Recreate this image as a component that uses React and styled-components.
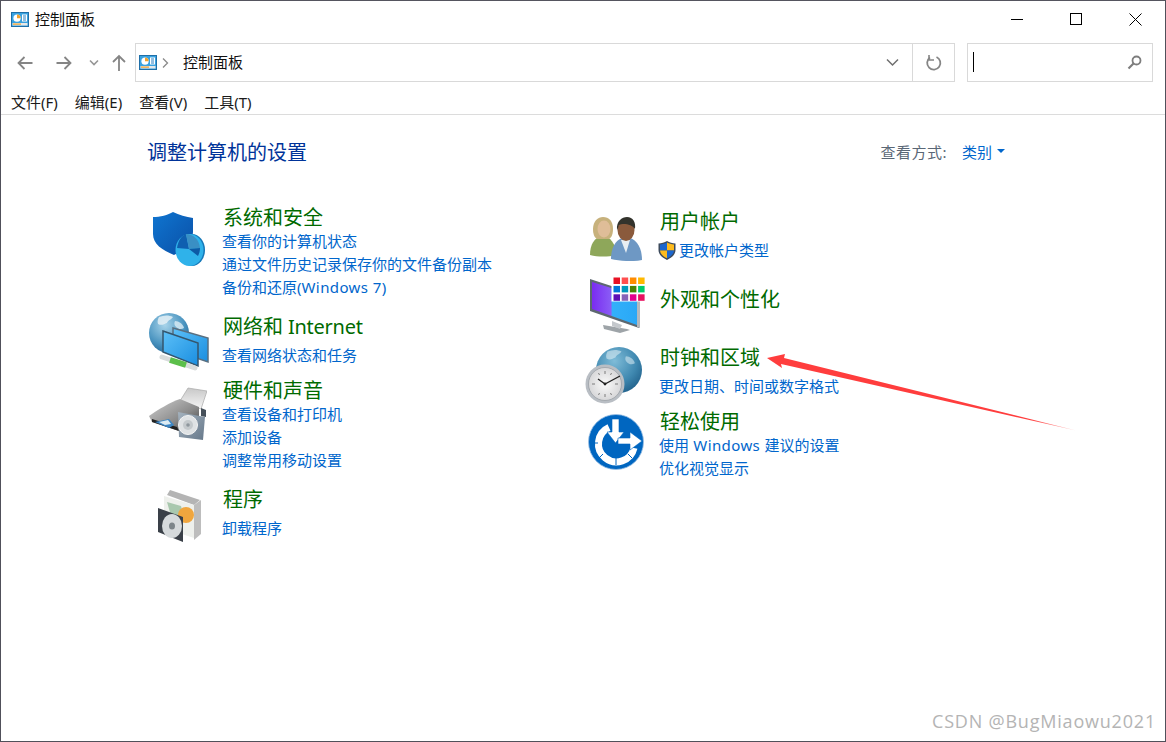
import React from "react";
import styled, { createGlobalStyle } from "styled-components";

const GlobalStyle = createGlobalStyle`
  html, body {
    margin: 0;
    padding: 0;
    background: #fff;
  }
  body {
    font-family: "Noto Sans", "Noto Sans CJK SC", sans-serif;
    font-size: 15px;
  }
`;

const Win = styled.div`
  position: relative;
  box-sizing: border-box;
  width: 1166px;
  height: 742px;
  border: 1px solid #50505a;
  border-top-color: #55555f;
  background: #fff;
  overflow: hidden;
`;

/* title bar */
const TitleBar = styled.div`
  display: flex;
  align-items: center;
  box-sizing: border-box;
  height: 36px;
  padding-left: 10px;
`;
const TitleText = styled.span`
  margin-left: 6px;
  font-size: 15px;
  color: #111;
  line-height: 20px;
`;
const WinButtons = styled.div`
  display: flex;
  margin-left: auto;
  height: 36px;
`;
const WinButton = styled.div`
  display: flex;
  align-items: center;
  justify-content: center;
  width: 59px;
`;

/* nav and address */
const Toolbar = styled.div`
  display: flex;
  align-items: stretch;
  height: 39px;
  margin-top: 6px;
`;
const NavGroup = styled.div`
  display: flex;
  align-items: center;
  width: 134px;
  padding-left: 16px;
  box-sizing: border-box;
`;
const NavIcon = styled.svg`
  flex: none;
  margin-right: ${(p) => p.$after}px;
`;
const AddressBar = styled.div`
  display: flex;
  align-items: center;
  box-sizing: border-box;
  width: 820px;
  border: 1px solid #d9d9d9;
  padding-left: 3px;
`;
const Crumb = styled.span`
  font-size: 15px;
  color: #111;
  margin: -2px 0 0 10px;
`;
const AddressEnd = styled.div`
  display: flex;
  align-items: center;
  margin-left: auto;
  height: 100%;
`;
const RefreshBox = styled.div`
  display: flex;
  align-items: center;
  justify-content: center;
  box-sizing: border-box;
  width: 42px;
  height: 100%;
  margin-left: 13px;
  border-left: 1px solid #d9d9d9;
`;
const SearchBox = styled.div`
  display: flex;
  align-items: center;
  justify-content: space-between;
  box-sizing: border-box;
  width: 186px;
  margin-left: 12px;
  padding: 0 10px 0 5px;
  border: 1px solid #d9d9d9;
`;
const Cursor = styled.div`
  width: 1px;
  height: 20px;
  margin-top: -2px;
  background: #000;
`;

/* menu */
const MenuBar = styled.div`
  display: flex;
  gap: 17px;
  height: 33px;
  align-items: center;
  padding-left: 10px;
  padding-top: 8px;
  box-sizing: border-box;
  border-bottom: 1px solid #dcdcdc;
`;
const MenuItem = styled.span`
  font-size: 15px;
  color: #1a1a1a;
  line-height: 20px;
`;

/* content */
const Content = styled.div`
  padding: 0 160px 0 147px;
`;
const HeaderRow = styled.div`
  display: flex;
  align-items: center;
  justify-content: space-between;
  height: 26px;
  margin-top: 25px;
`;
const PageTitle = styled.h1`
  margin: 0 0 0 -1px;
  font-size: 20px;
  font-weight: 400;
  color: #003399;
  line-height: 26px;
`;
const ViewBy = styled.div`
  display: flex;
  align-items: center;
  margin-bottom: 4px;
`;
const ViewLabel = styled.span`
  font-size: 15px;
  letter-spacing: 0.5px;
  color: #5a6776;
  margin-right: 15px;
`;
const ViewValue = styled.span`
  font-size: 15px;
  color: #0066cc;
`;
const Caret = styled.span`
  width: 0;
  height: 0;
  margin-left: 5px;
  border-left: 4px solid transparent;
  border-right: 4px solid transparent;
  border-top: 4px solid #0066cc;
`;
const Columns = styled.div`
  display: grid;
  grid-template-columns: 437px 1fr;
  margin-top: 38px;
`;
const Column = styled.div`
  display: flex;
  flex-direction: column;
  padding-top: ${(p) => p.$top || 0}px;
`;
const Section = styled.section`
  display: flex;
  margin-top: ${(p) => p.$gap || 0}px;
`;
const IconSlot = styled.div`
  flex: none;
  width: 74px;
  height: 26px;
  padding-left: ${(p) => p.$x}px;
  margin-top: ${(p) => p.$y}px;
  box-sizing: border-box;
`;
const Body = styled.div`
  display: flex;
  flex-direction: column;
`;
const Heading = styled.div`
  font-size: 20px;
  line-height: 27px;
  margin-left: 1px;
  color: #006a00;
  margin-bottom: ${(p) => (p.$single ? 4 : -1)}px;
`;
const HeadingLatin = styled.span`
  letter-spacing: -0.25px;
`;
const LinkRow = styled.a`
  display: flex;
  align-items: center;
  font-size: 15px;
  line-height: 23px;
  height: 23px;
  color: #0066cc;
  white-space: pre;
`;
const Latin = styled.span`
  letter-spacing: 0.4px;
`;
const UacIcon = styled.svg`
  flex: none;
  margin: 0 3px 0 -1px;
`;

/* overlays */
const Pointer = styled.svg`
  position: absolute;
  left: 0;
  top: 0;
  pointer-events: none;
`;
const Watermark = styled.div`
  position: absolute;
  right: 9px;
  bottom: 8px;
  font-family: "Open Sans", sans-serif;
  font-size: 18px;
  line-height: 24px;
  letter-spacing: 0.8px;
  color: #b4b4b4;
`;

const CpIcon = () => (
  <svg width="18" height="15" viewBox="0 0 18 15">
    <rect x="0.5" y="0.5" width="17" height="14" fill="#39a2e0" stroke="#1f6fa8" />
    <rect x="1.5" y="11" width="15" height="2.5" fill="#e8e8e8" />
    <rect x="2" y="11.5" width="8" height="1.2" fill="#f2a12c" />
    <circle cx="6" cy="6.2" r="3.6" fill="#fff" />
    <path d="M6 6.2V2.6A3.6 3.6 0 0 1 9.6 6.2Z" fill="#f2a12c" />
    <rect x="11" y="2.5" width="5" height="7" fill="#fff" />
    <path d="M12 4h3M12 6h3M12 8h3" stroke="#2a7fc0" />
  </svg>
);

const ShieldPie = () => (
  <svg width="52" height="54" viewBox="0 0 52 54">
    <defs>
      <linearGradient id="shieldFill" x1="0" y1="0" x2="1" y2="1">
        <stop offset="0" stopColor="#0f75d0" />
        <stop offset="1" stopColor="#0a4fa6" />
      </linearGradient>
    </defs>
    <path d="M20 0C15 3 7 5 0 5V22C0 32 9 38 21 43C30 39 40 32 40 20V6C33 5 26 3 20 0Z" fill="url(#shieldFill)" />
    <ellipse cx="39" cy="38" rx="13" ry="16" fill="#1578b8" />
    <ellipse cx="36.5" cy="38" rx="14" ry="16" fill="#2fb2ea" />
    <path d="M33 22L36 37L24 36C25 29 28 24 33 22Z" fill="#0f5fb0" />
    <path d="M36 37L33 22C40 22 46 27 47 36Z" fill="#3a8fc4" />
    <path d="M36 37L47 36C47 39 46 42 45 44Z" fill="#0d5aa5" />
  </svg>
);

const Globe = ({ id, cx, cy, r, dark }) => (
  <g>
    <defs>
      <radialGradient id={id} cx="0.4" cy="0.3" r="0.8">
        <stop offset="0" stopColor={dark ? "#7fbcd8" : "#a8d4ea"} />
        <stop offset="0.6" stopColor={dark ? "#3f88b0" : "#4a94c0"} />
        <stop offset="1" stopColor={dark ? "#1c5a84" : "#1f5f8f"} />
      </radialGradient>
    </defs>
    <circle cx={cx} cy={cy} r={r} fill={`url(#${id})`} />
    <path
      d={`M${cx - r * 0.5} ${cy - r * 0.8}c5 -2 10 -2 14 0c-2 3 -5 3 -6 6c-3 1 -5 3 -9 1c-1 -3 0 -5 1 -7Z`}
      fill="#e4f0f6"
      opacity={dark ? 0.55 : 0.85}
    />
    <path
      d={`M${cx + r * 0.3} ${cy - r * 0.6}c4 0 8 3 9 7c-3 2 -6 1 -8 -1c-2 -2 -2 -4 -1 -6Z`}
      fill="#dcecf4"
      opacity={dark ? 0.55 : 0.8}
    />
  </g>
);

const NetworkIcon = () => (
  <svg width="60" height="60" viewBox="0 0 60 60">
    <defs>
      <linearGradient id="scr" x1="0" y1="0" x2="1" y2="1">
        <stop offset="0" stopColor="#5cc0f8" />
        <stop offset="1" stopColor="#1a8ee0" />
      </linearGradient>
    </defs>
    <Globe id="gNet" cx={20} cy={20} r={20} />
    <path d="M24 15L59 25V49L24 37Z" fill="url(#scr)" stroke="#5a6f80" strokeWidth="1.5" />
    <path d="M14 18L49 30V53L14 39Z" fill="url(#scr)" stroke="#34566e" strokeWidth="1.5" />
    <path d="M13 44L46 55" stroke="#d8dcdc" strokeWidth="5" strokeLinecap="round" />
    <path d="M21 47L37 52" stroke="#5cbf4a" strokeWidth="6" />
  </svg>
);

const PrinterIcon = () => (
  <svg width="58" height="54" viewBox="0 0 58 54">
    <defs>
      <linearGradient id="sheet" x1="0" y1="0" x2="0" y2="1">
        <stop offset="0" stopColor="#c8c8c8" />
        <stop offset="1" stopColor="#f6f6f6" />
      </linearGradient>
      <linearGradient id="prn" x1="0" y1="0" x2="1" y2="1">
        <stop offset="0" stopColor="#d0d0d0" />
        <stop offset="0.6" stopColor="#8a8a8a" />
        <stop offset="1" stopColor="#3a3a3a" />
      </linearGradient>
      <linearGradient id="spk" x1="0" y1="0" x2="1" y2="1">
        <stop offset="0" stopColor="#a4b2be" />
        <stop offset="1" stopColor="#66788a" />
      </linearGradient>
    </defs>
    <path d="M31 14L39 1L58 4L52 22Z" fill="url(#sheet)" stroke="#a8a8a8" strokeWidth="0.7" />
    <path d="M0 29C8 23 22 15 31 12L50 20V30L30 44L3 35Z" fill="url(#prn)" />
    <path d="M3 32L28 40L30 44L3 35Z" fill="#222" />
    <path d="M6 35L20 32L25 38L20 41Z" fill="#3c86c4" />
    <path d="M10 35L19 33L22 37L16 38Z" fill="#dcecf4" />
    <path d="M29 25L56 30L54 53L30 50Z" fill="url(#spk)" />
    <path d="M52 21L57 23V30L52 29Z" fill="#46505a" />
    <circle cx="39" cy="38" r="9.5" fill="#dfe2e4" stroke="#f4f4f4" />
    <circle cx="39" cy="38" r="5" fill="#c4c9cc" />
    <circle cx="39" cy="38" r="1.8" fill="#8e969c" />
  </svg>
);

const BoxIcon = () => (
  <svg width="46" height="52" viewBox="0 0 46 52">
    <path d="M10 5L13 0L43 10L37 15Z" fill="#b4b4b4" />
    <path d="M7 6L37 15V48L7 38Z" fill="#eef0ec" />
    <path d="M37 15L44 10V44L37 50Z" fill="#bdbdbd" />
    <path d="M10 12L24 16L28 30L14 26Z" fill="#a9c8ae" />
    <circle cx="29" cy="25" r="8" fill="#f0a63e" />
    <path d="M1 18L26 27V52L1 42Z" fill="#3a4048" />
    <ellipse cx="15" cy="36" rx="10" ry="12" fill="#d6dadc" />
    <ellipse cx="15" cy="36" rx="3" ry="3.5" fill="#7d858a" />
  </svg>
);

const UsersIcon = () => (
  <svg width="52" height="44" viewBox="0 0 52 44">
    <path d="M0 38C0 28 4 20 13 19C20 20 26 26 26 38C18 40 8 40 0 38Z" fill="#8ea75a" />
    <path d="M3 12C3 4 8 0 13 0C19 0 23 4 23 12C23 18 21 21 19 22H7C5 21 3 18 3 12Z" fill="#c7b17c" />
    <ellipse cx="14" cy="12" rx="6.5" ry="8.5" fill="#dfbd98" />
    <path d="M21 42C21 30 26 21 36 20C46 21 52 30 52 43C42 45 30 44 21 42Z" fill="#6e98c4" />
    <path d="M31 23L36 36L40 23Z" fill="#e8eef2" />
    <ellipse cx="36" cy="13" rx="8.5" ry="11" fill="#8a5a3c" />
    <path d="M27 13C26 4 32 0 37 0C43 0 46 5 45 12C42 7 33 6 29 8C28 10 28 12 27 13Z" fill="#33332c" />
  </svg>
);

const swatches = [
  ["#e81123", "#ff4f4f", "#ff8c00", "#ffb900"],
  ["#0078d7", "#0099bc", "#498205", "#00cc6a"],
  ["#5c0fb5", "#8764b8", "#e3008c", "#e81160"],
];

const DisplayIcon = () => (
  <svg width="56" height="58" viewBox="0 0 56 58">
    <defs>
      <linearGradient id="dsk" x1="0" y1="0" x2="1" y2="0">
        <stop offset="0" stopColor="#7a2cf0" />
        <stop offset="0.42" stopColor="#8a5cf6" />
        <stop offset="0.45" stopColor="#32b0fa" />
        <stop offset="1" stopColor="#2aa8f6" />
      </linearGradient>
    </defs>
    <path d="M13 50L37 54L40 55L30 58L14 54Z" fill="#9ea4a8" />
    <path d="M22 46L32 50L30 54L22 51Z" fill="#c4c8cc" />
    <path d="M0 4L49 20V53L0 36Z" fill="#5d6870" />
    <path d="M47 20L50 21V53L47 52Z" fill="#b4b8bc" />
    <path d="M2 7L47 21V50L2 34Z" fill="url(#dsk)" />
    <rect x="21.5" y="0.5" width="34" height="26" fill="#fff" />
    {swatches.map((row, i) =>
      row.map((c, j) => (
        <rect key={c} x={23.5 + j * 8.2} y={2.5 + i * 8.4} width="6.5" height="6.5" fill={c} />
      ))
    )}
  </svg>
);

const ClockIcon = () => (
  <svg width="58" height="58" viewBox="0 0 58 58">
    <defs>
      <radialGradient id="face" cx="0.5" cy="0.5" r="0.6">
        <stop offset="0" stopColor="#fafafa" />
        <stop offset="1" stopColor="#d0d0d2" />
      </radialGradient>
    </defs>
    <Globe id="gClock" cx={34} cy={23} r={23} dark />
    <circle cx="20" cy="37" r="19.5" fill="#b9bec4" />
    <circle cx="20" cy="37" r="16.5" fill="url(#face)" stroke="#8c9298" strokeWidth="0.6" />
    <path d="M20 24v3M20 47v3M7 37h3M30 37h3M13.5 26l1 2M26.5 26l-1 2M13.5 48l1 -2M26.5 48l-1 -2" stroke="#7d7d7d" />
    <path d="M13 32L20 37L35 29" fill="none" stroke="#222" strokeWidth="1.4" />
    <circle cx="20" cy="37" r="1.4" fill="#222" />
  </svg>
);

const EaseIcon = () => (
  <svg width="56" height="56" viewBox="0 0 56 56">
    <circle cx="28" cy="28" r="27.5" fill="#0066c0" stroke="#9cc0e4" strokeWidth="0.8" />
    <path d="M46 34A18 18 0 1 1 21 13.5" fill="none" stroke="#fff" strokeWidth="7" />
    <path
      d="M28 46V53M40 42L44 46M15 42L11 46M10 31H3"
      stroke="#0066c0"
      strokeWidth="1"
      transform="translate(0 -2)"
    />
    <path d="M24 5H31V18H36L27.5 29L19 18H24Z" fill="#fff" stroke="#0066c0" strokeWidth="0.6" />
    <path d="M30 24H42V18L54 27L42 36V30H30Z" fill="#fff" stroke="#0066c0" strokeWidth="0.6" />
  </svg>
);

const UacShield = () => (
  <UacIcon width="18" height="19" viewBox="0 0 18 19">
    <path d="M9 0C6.5 1.5 3.5 2.5 0.5 2.5V9C0.5 14 5 17 9 19C13 17 17.5 14 17.5 9V2.5C14.5 2.5 11.5 1.5 9 0Z" fill="#3c4a5c" />
    <path d="M9 1.5V9.5H2V9V3.5C4.5 3.3 7 2.6 9 1.5Z" fill="#1b66cf" />
    <path d="M9 1.5C11 2.6 13.5 3.3 16 3.5V9.5H9Z" fill="#fdbb1e" />
    <path d="M2 9.5H9V17.3C5.5 15.7 2.3 13.2 2 9.5Z" fill="#fdbb1e" />
    <path d="M16 9.5H9V17.3C12.5 15.7 15.7 13.2 16 9.5Z" fill="#1b66cf" />
  </UacIcon>
);

const leftSections = [
  {
    gap: 0,
    icon: <ShieldPie />,
    x: 5,
    y: 8,
    title: "系统和安全",
    links: [
      "查看你的计算机状态",
      "通过文件历史记录保存你的文件备份副本",
      <span>备份和还原(<Latin>Windows 7</Latin>)</span>,
    ],
  },
  {
    gap: 14,
    icon: <NetworkIcon />,
    x: 1,
    y: 0,
    title: <>网络和<HeadingLatin> Internet</HeadingLatin></>,
    links: ["查看网络状态和任务"],
  },
  {
    gap: 10,
    icon: <PrinterIcon />,
    x: 1,
    y: 10,
    title: "硬件和声音",
    links: ["查看设备和打印机", "添加设备", "调整常用移动设置"],
  },
  { gap: 14, icon: <BoxIcon />, x: 9, y: 4, title: "程序", links: ["卸载程序"] },
];

const rightSections = [
  { gap: 0, icon: <UsersIcon />, x: 5, y: 9, title: "用户帐户", links: ["更改帐户类型"], uac: true },
  { gap: 24, icon: <DisplayIcon />, x: 5, y: -11, title: "外观和个性化", links: [] },
  { gap: 32, icon: <ClockIcon />, x: 0, y: 3, title: "时钟和区域", links: ["更改日期、时间或数字格式"] },
  {
    gap: 10,
    icon: <EaseIcon />,
    x: 3,
    y: 6,
    title: "轻松使用",
    links: [<span>使用<Latin> Windows </Latin>建议的设置</span>, "优化视觉显示"],
  },
];

const Category = ({ item }) => (
  <Section $gap={item.gap}>
    <IconSlot $x={item.x} $y={item.y}>
      {item.icon}
    </IconSlot>
    <Body>
      <Heading $single={item.links.length === 1}>{item.title}</Heading>
      {item.links.map((l, i) => (
        <LinkRow key={i}>
          {item.uac && <UacShield />}
          {l}
        </LinkRow>
      ))}
    </Body>
  </Section>
);

export default function App() {
  return (
    <>
      <GlobalStyle />
      <Win>
        <TitleBar>
          <CpIcon />
          <TitleText>控制面板</TitleText>
          <WinButtons>
            <WinButton>
              <svg width="13" height="13" viewBox="0 0 13 13">
                <path d="M0 6.5H12" stroke="#000" />
              </svg>
            </WinButton>
            <WinButton>
              <svg width="13" height="13" viewBox="0 0 13 13">
                <rect x="0.5" y="0.5" width="11" height="11" fill="none" stroke="#000" />
              </svg>
            </WinButton>
            <WinButton>
              <svg width="13" height="13" viewBox="0 0 13 13">
                <path d="M0.5 0.5L12.5 12.5M12.5 0.5L0.5 12.5" stroke="#000" />
              </svg>
            </WinButton>
          </WinButtons>
        </TitleBar>

        <Toolbar>
          <NavGroup>
            <NavIcon $after={23} width="16" height="14" viewBox="0 0 16 14">
              <path d="M15.5 7H1.5M7.5 1L1.5 7L7.5 13" fill="none" stroke="#858585" strokeWidth="1.8" />
            </NavIcon>
            <NavIcon $after={17} width="16" height="14" viewBox="0 0 16 14">
              <path d="M0.5 7H14.5M8.5 1L14.5 7L8.5 13" fill="none" stroke="#858585" strokeWidth="1.8" />
            </NavIcon>
            <NavIcon $after={13} width="10" height="8" viewBox="0 0 10 8">
              <path d="M1 1.5L5 5.5L9 1.5" fill="none" stroke="#969696" strokeWidth="1.6" />
            </NavIcon>
            <NavIcon $after={0} width="14" height="17" viewBox="0 0 14 17">
              <path d="M7 17V2M1 8L7 2L13 8" fill="none" stroke="#858585" strokeWidth="1.8" />
            </NavIcon>
          </NavGroup>
          <AddressBar>
            <CpIcon />
            <svg width="16" height="12" viewBox="0 0 16 12">
              <path d="M6 1.5L10.5 6L6 10.5" fill="none" stroke="#8a8a8a" strokeWidth="1.3" />
            </svg>
            <Crumb>控制面板</Crumb>
            <AddressEnd>
              <svg width="13" height="9" viewBox="0 0 13 9">
                <path d="M1 1.5L6.5 7L12 1.5" fill="none" stroke="#6f6f6f" strokeWidth="1.5" />
              </svg>
              <RefreshBox>
                <svg width="16" height="16" viewBox="0 0 16 16">
                  <path d="M10.5 2A6.6 6.6 0 1 1 4 2.6" fill="none" stroke="#858585" strokeWidth="1.8" />
                  <path d="M3 0V5H8" fill="none" stroke="#858585" strokeWidth="1.6" />
                </svg>
              </RefreshBox>
            </AddressEnd>
          </AddressBar>
          <SearchBox>
            <Cursor />
            <svg width="15" height="15" viewBox="0 0 15 15">
              <circle cx="9.5" cy="5.5" r="4" fill="none" stroke="#7d7d7d" strokeWidth="1.8" />
              <path d="M6.5 8.5L1.5 13.5" stroke="#7d7d7d" strokeWidth="2.2" />
            </svg>
          </SearchBox>
        </Toolbar>

        <MenuBar>
          <MenuItem>文件(F)</MenuItem>
          <MenuItem>编辑(E)</MenuItem>
          <MenuItem>查看(V)</MenuItem>
          <MenuItem>工具(T)</MenuItem>
        </MenuBar>

        <Content>
          <HeaderRow>
            <PageTitle>调整计算机的设置</PageTitle>
            <ViewBy>
              <ViewLabel>查看方式:</ViewLabel>
              <ViewValue>类别</ViewValue>
              <Caret />
            </ViewBy>
          </HeaderRow>
          <Columns>
            <Column>
              {leftSections.map((s, i) => (
                <Category key={i} item={s} />
              ))}
            </Column>
            <Column $top={4}>
              {rightSections.map((s, i) => (
                <Category key={i} item={s} />
              ))}
            </Column>
          </Columns>
        </Content>

        <Pointer width="1164" height="740" viewBox="1 1 1164 740">
          <defs>
            <linearGradient id="tail" x1="767" y1="358" x2="1076" y2="430" gradientUnits="userSpaceOnUse">
              <stop offset="0" stopColor="#ff3d3d" />
              <stop offset="0.85" stopColor="#ff3d3d" />
              <stop offset="1" stopColor="#ffb0b0" />
            </linearGradient>
          </defs>
          <polygon points="767,358 785,354 784,358 1076,430.5 781,364 782,368" fill="url(#tail)" />
        </Pointer>
        <Watermark>CSDN @BugMiaowu2021</Watermark>
      </Win>
    </>
  );
}
